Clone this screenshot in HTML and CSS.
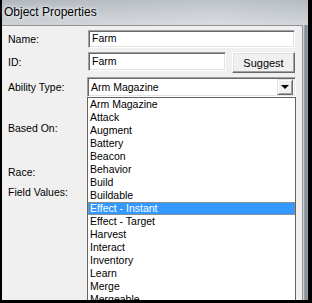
FILE: index.html
```html
<!DOCTYPE html>
<html lang="en">
<head>
    <meta charset="UTF-8">
    <title>Object Properties</title>
    <link rel="stylesheet" href="styles.css">
</head>
<body>
    <div class="screen">
        <div class="window">
            <div class="titlebar">Object Properties</div>
            <div class="frame">
                <div class="panel">
                    <div class="row row-name">
                        <label class="field-label">Name:</label>
                        <div class="edit edit-wide">Farm</div>
                    </div>
                    <div class="row row-id">
                        <label class="field-label">ID:</label>
                        <div class="edit edit-id">Farm</div>
                        <button class="btn">Suggest</button>
                    </div>
                    <div class="row row-type">
                        <label class="field-label">Ability Type:</label>
                        <div class="combo">
                            <span class="combo-text">Arm Magazine</span>
                            <span class="combo-arrow"><span class="tri"></span></span>
                        </div>
                    </div>
                    <div class="more-labels">
                        <div class="field-label based">Based On:</div>
                        <div class="field-label race">Race:</div>
                        <div class="field-label values">Field Values:</div>
                    </div>

                    <!-- open drop-down of the ability type combo -->
                    <ul class="dropdown">
                        <li>Arm Magazine</li>
                        <li>Attack</li>
                        <li>Augment</li>
                        <li>Battery</li>
                        <li>Beacon</li>
                        <li>Behavior</li>
                        <li>Build</li>
                        <li>Buildable</li>
                        <li class="selected">Effect - Instant</li>
                        <li>Effect - Target</li>
                        <li>Harvest</li>
                        <li>Interact</li>
                        <li>Inventory</li>
                        <li>Learn</li>
                        <li>Merge</li>
                        <li>Mergeable</li>
                    </ul>
                </div>
                <div class="frame-edge"></div>
            </div>
        </div>
    </div>
</body>
</html>
```

FILE: styles.css
```css
body {
    margin: 0;
    background: #000;
    font-family: "Liberation Sans", Arial, sans-serif;
}

.screen {
    width: 312px;
    height: 303px;
    box-sizing: border-box;
    padding: 0 4px 3px 2px;
    background: #000;
    overflow: hidden;
}

.window {
    height: 300px;
    display: flex;
    flex-direction: column;
    background: linear-gradient(90deg, #b9bec3 0%, #c9cdd1 40%, #d4d8dc 70%, #c2c7cc 100%);
}

.titlebar {
    height: 25px;
    flex: none;
    padding-left: 2px;
    line-height: 24px;
    font-size: 12px;
    color: #000;
    text-shadow: 0 0 6px #f4f6f8, 0 0 3px #f4f6f8;
    background: linear-gradient(180deg, rgba(170, 176, 182, 0.5) 0%, rgba(220, 224, 228, 0.6) 100%);
}

.frame {
    flex: 1;
    display: flex;
    min-height: 0;
}

.panel {
    position: relative;
    flex: none;
    width: 301px;
    box-sizing: border-box;
    background: #f0f0f0;
    border-top: 1px solid #8e9398;
    border-right: 1px solid #8e9398;
    padding: 4px 0 0 6px;
    overflow: hidden;
    font-size: 10.5px;
}

.frame-edge {
    flex: 1;
    background: linear-gradient(90deg, #e8eaec 0%, #9aa2aa 30%, #7f8891 60%, #a4abb2 100%);
}

.row {
    display: flex;
    align-items: flex-start;
    margin-bottom: 4px;
}

.field-label {
    width: 80px;
    flex: none;
    align-self: center;
    line-height: 13px;
}

.edit {
    box-sizing: border-box;
    background: #fff;
    border: 1px solid;
    border-color: #a0a0a0 #fff #fff #a0a0a0;
    box-shadow: inset 1px 1px 0 #696969, inset -1px -1px 0 #e3e3e3;
    padding-left: 3px;
    line-height: 15px;
}

.edit-wide {
    width: 207px;
    height: 18px;
}

.edit-id {
    width: 138px;
    height: 19px;
    line-height: 16px;
}

.btn {
    margin-left: 6px;
    width: 63px;
    height: 21px;
    padding: 0;
    font: inherit;
    font-size: 11px;
    color: #000;
    background: #f0f0f0;
    border: 1px solid;
    border-color: #fff #696969 #696969 #fff;
    box-shadow: inset -1px -1px 0 #a0a0a0, inset 1px 1px 0 #e3e3e3;
}

.combo {
    margin-left: -1px;
    width: 209px;
    height: 20px;
    box-sizing: border-box;
    display: flex;
    align-items: center;
    background: #fff;
    border: 1px solid;
    border-color: #a0a0a0 #fff #fff #a0a0a0;
    box-shadow: inset 1px 1px 0 #696969, inset -1px -1px 0 #e3e3e3;
    padding: 2px 2px 2px 3px;
}

.combo-text {
    flex: 1;
}

.combo-arrow {
    width: 16px;
    height: 16px;
    box-sizing: border-box;
    display: flex;
    align-items: center;
    justify-content: center;
    background: #f0f0f0;
    border: 1px solid;
    border-color: #e3e3e3 #696969 #696969 #e3e3e3;
    box-shadow: inset 1px 1px 0 #fff, inset -1px -1px 0 #a0a0a0;
}

.tri {
    width: 0;
    height: 0;
    border-left: 4px solid transparent;
    border-right: 4px solid transparent;
    border-top: 4px solid #000;
}

.more-labels .based {
    margin-top: 25px;
}

.more-labels .race {
    margin-top: 31px;
}

.more-labels .values {
    margin-top: 7px;
}

.dropdown {
    position: absolute;
    left: 85px;
    top: 71px;
    width: 209px;
    height: 215px;
    box-sizing: border-box;
    margin: 0;
    padding: 0;
    list-style: none;
    background: #fff;
    border: 1px solid #646464;
}

.dropdown li {
    height: 13px;
    line-height: 13px;
    padding-left: 2px;
    white-space: nowrap;
}

.dropdown li.selected {
    background: #3399ff;
    color: #fff;
    outline: 1px dotted #d08a3a;
    outline-offset: -1px;
}
```
